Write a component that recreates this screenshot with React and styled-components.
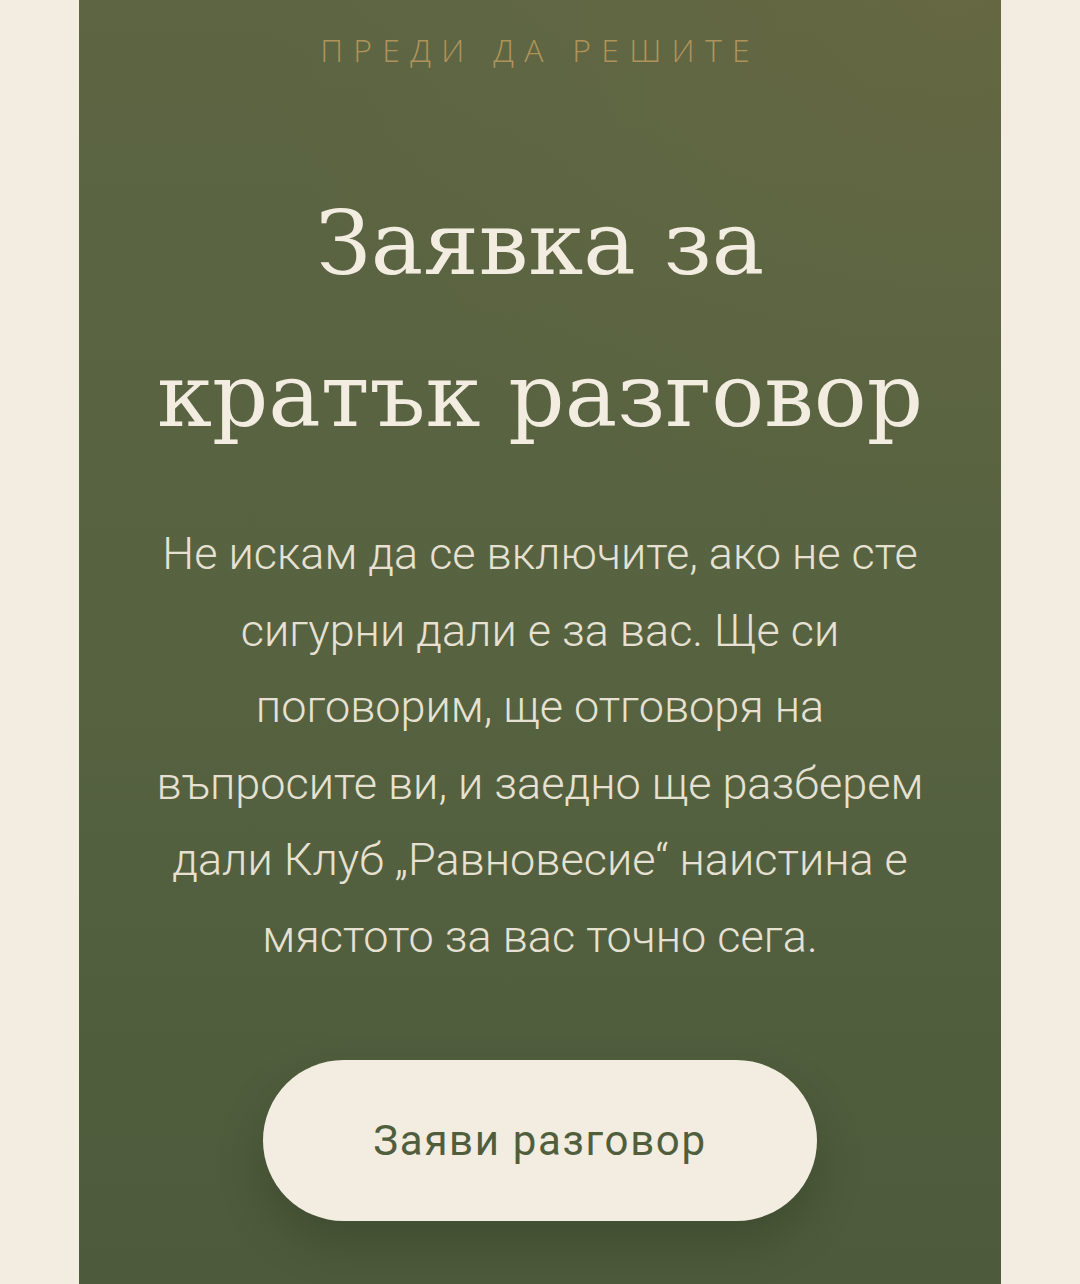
import styled, { createGlobalStyle } from 'styled-components';

const Global = createGlobalStyle`
    html, body {
        margin: 0;
        padding: 0;
        background: #f3ede1;
    }
`;

const Page = styled.div`
    display: flex;
    justify-content: center;
    background: #f3ede1;
    min-height: 1284px;
`;

const Panel = styled.section`
    width: 922px;
    min-height: 1340px;
    box-sizing: border-box;
    padding: 34px 60px 80px;
    display: flex;
    flex-direction: column;
    align-items: center;
    text-align: center;
    background:
        radial-gradient(ellipse 75% 40% at 95% 0%, rgba(115, 110, 65, 0.35), rgba(115, 110, 65, 0) 100%),
        linear-gradient(180deg, #5d6543 0%, #566240 50%, #4c5a3b 100%);
`;

const Eyebrow = styled.div`
    font-family: 'Open Sans', 'Noto Sans', sans-serif;
    font-weight: 300;
    font-size: 32px;
    line-height: 32px;
    letter-spacing: 0.32em;
    color: #ae945a;
`;

const Title = styled.h1`
    margin: 102px 0 0;
    font-family: 'DejaVu Serif', 'Liberation Serif', serif;
    font-weight: 400;
    font-size: 88px;
    line-height: 152px;
    color: #f2ede0;
`;

const Lead = styled.p`
    margin: 44px 0 0;
    font-family: Roboto, 'Noto Sans', sans-serif;
    font-weight: 300;
    font-size: 45px;
    line-height: 76.5px;
    color: #e6e1d2;
`;

const Cta = styled.button`
    margin-top: 85px;
    width: 554px;
    height: 161px;
    border: none;
    border-radius: 81px;
    background: #f2ede0;
    color: #515e3e;
    font-family: Roboto, 'Noto Sans', sans-serif;
    font-weight: 400;
    font-size: 42px;
    letter-spacing: 0.04em;
    box-shadow: 0 22px 44px rgba(30, 40, 20, 0.28);
    cursor: pointer;
`;

export default function App() {
    return (
        <Page>
            <Global />
            <Panel>
                <Eyebrow>ПРЕДИ ДА РЕШИТЕ</Eyebrow>
                <Title>
                    Заявка за
                    <br />
                    кратък разговор
                </Title>
                <Lead>
                    Не искам да се включите, ако не сте
                    <br />
                    сигурни дали е за вас. Ще си
                    <br />
                    поговорим, ще отговоря на
                    <br />
                    въпросите ви, и заедно ще разберем
                    <br />
                    дали Клуб „Равновесие“ наистина е
                    <br />
                    мястото за вас точно сега.
                </Lead>
                <Cta>Заяви разговор</Cta>
            </Panel>
        </Page>
    );
}
